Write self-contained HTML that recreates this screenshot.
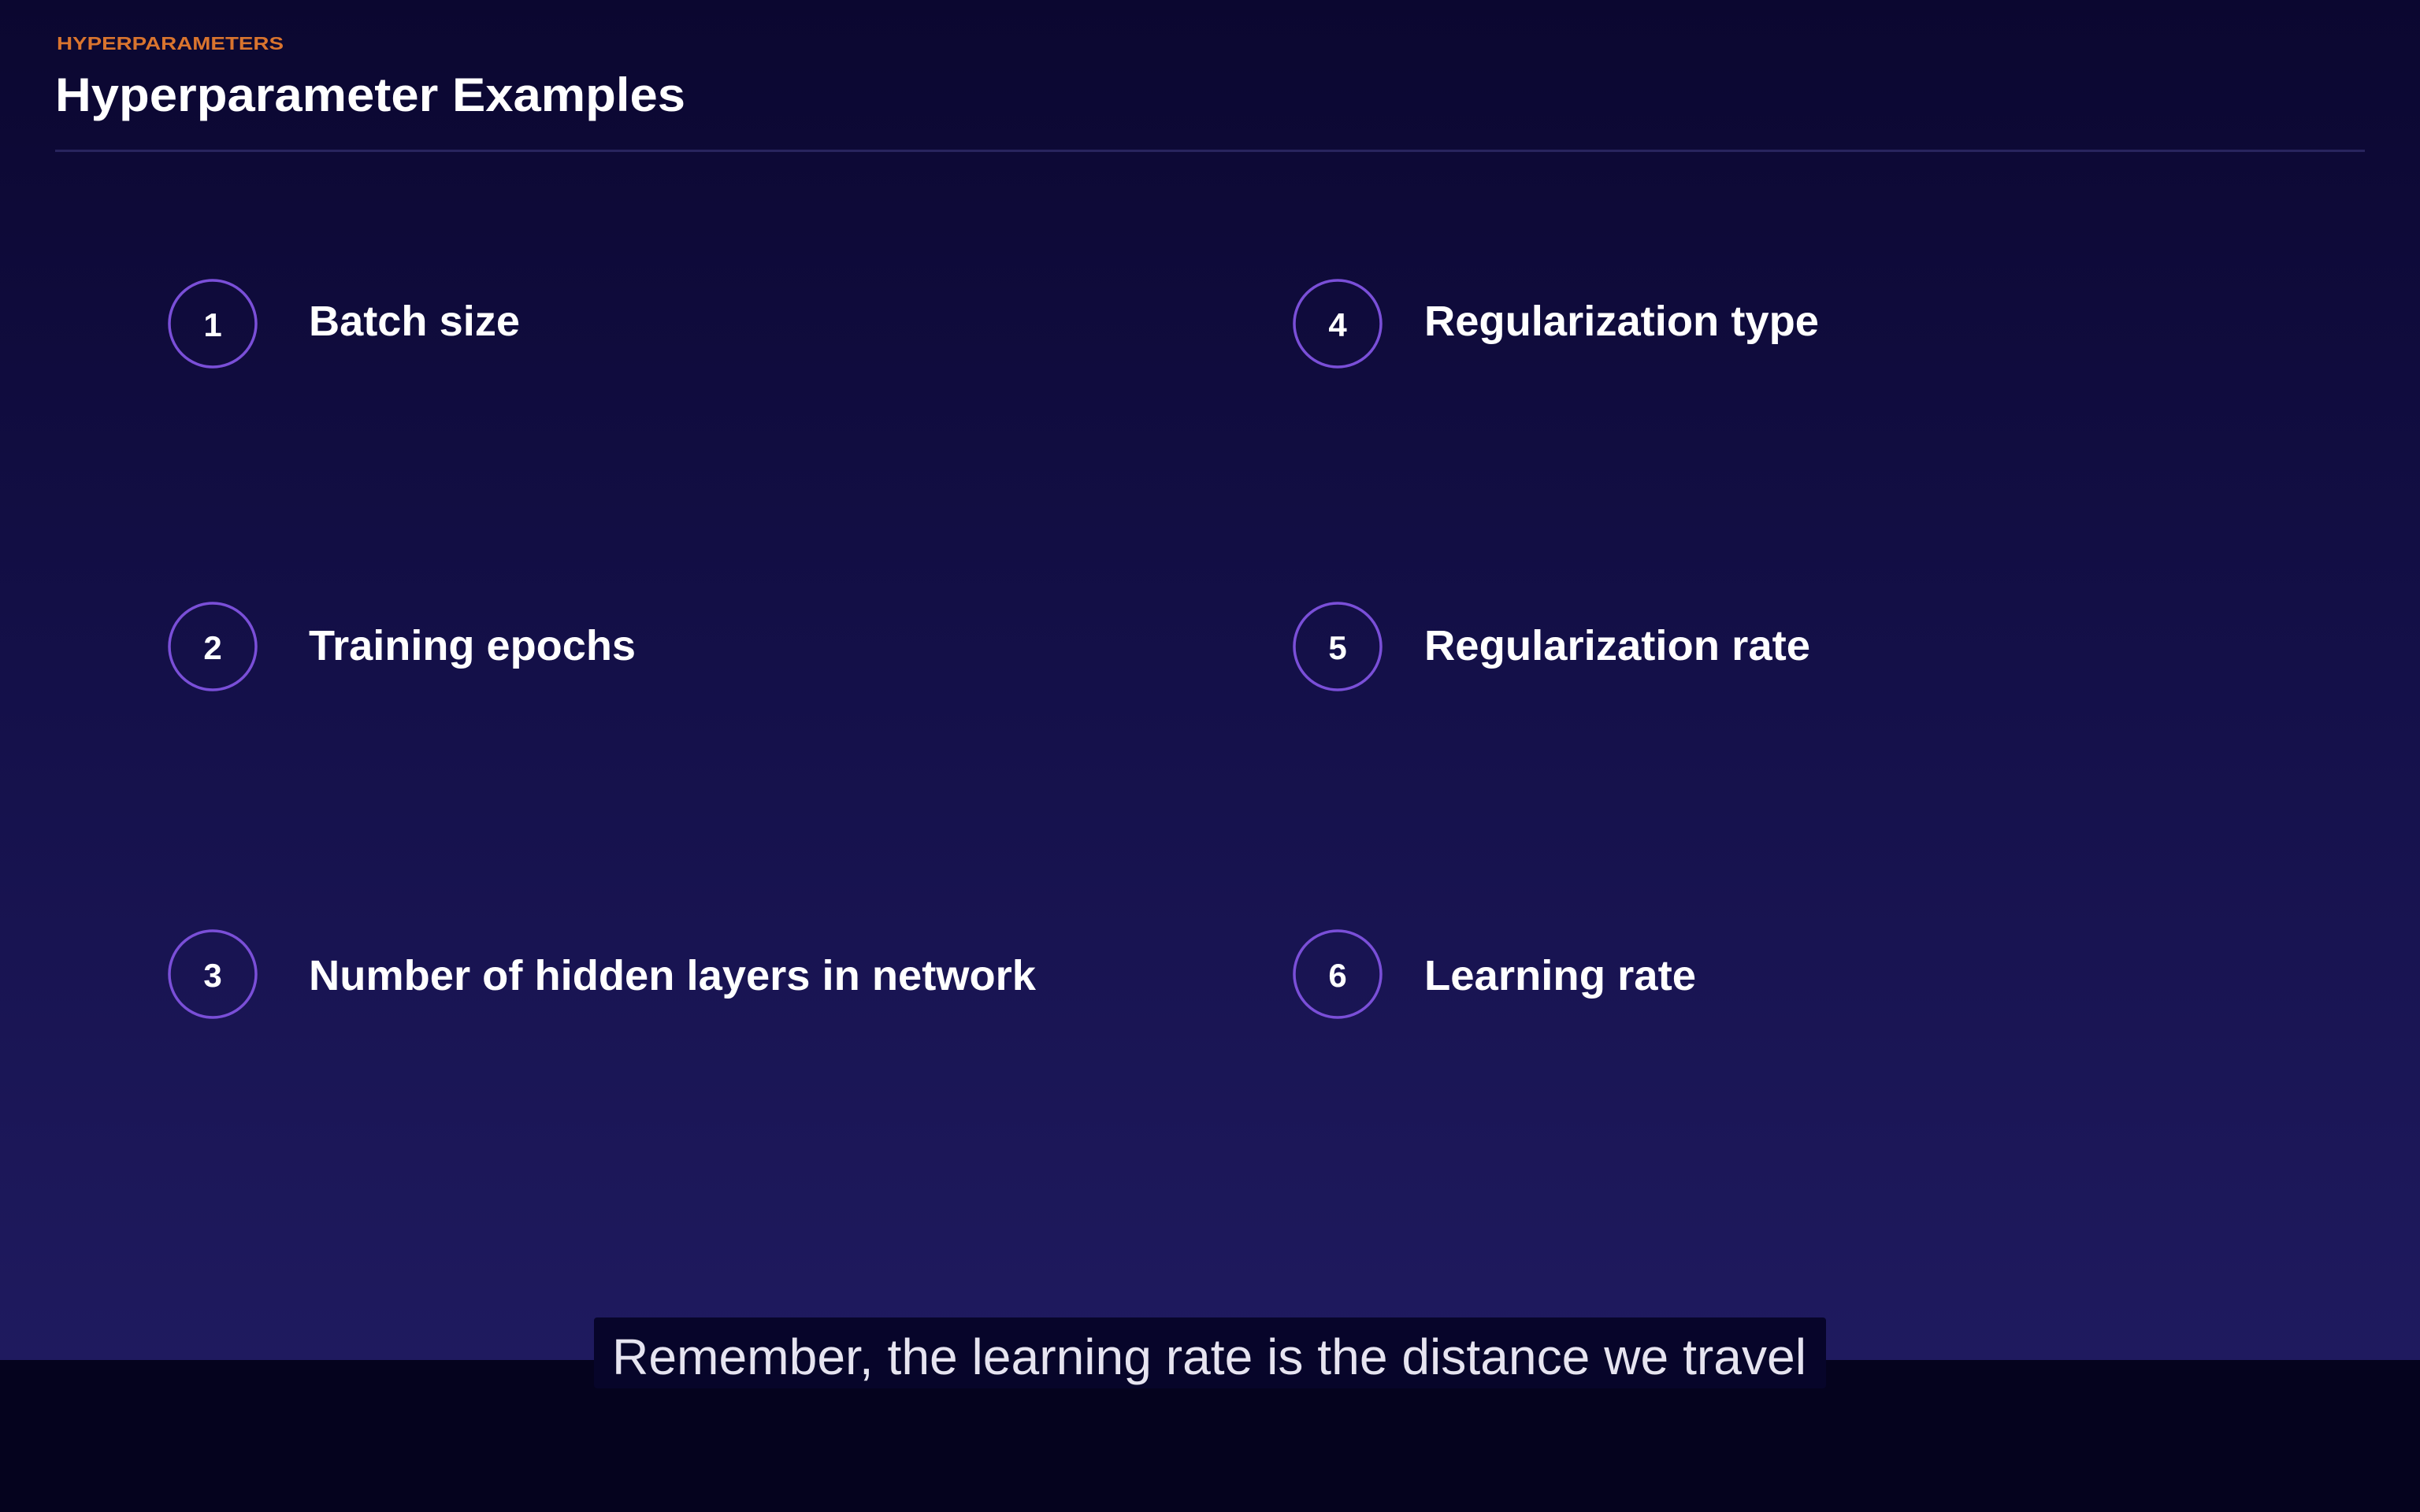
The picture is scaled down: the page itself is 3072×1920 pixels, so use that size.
<!DOCTYPE html>
<html><head><meta charset="utf-8"><style>
html,body{margin:0;padding:0;width:3072px;height:1920px;overflow:hidden;background:#05031e}
svg{display:block}
</style></head><body>
<svg width="3072" height="1920" viewBox="0 0 3072 1920" xmlns="http://www.w3.org/2000/svg" font-family="Liberation Sans, Arial, sans-serif">
<defs>
<linearGradient id="bg" x1="0" y1="0" x2="0" y2="1">
<stop offset="0" stop-color="#0b0730"/>
<stop offset="0.5" stop-color="#141049"/>
<stop offset="1" stop-color="#1f1a5f"/>
</linearGradient>
</defs>
<rect x="0" y="0" width="3072" height="1727" fill="url(#bg)"/>
<rect x="0" y="1727" width="3072" height="193" fill="#05031e"/>
<text x="72" y="63" font-size="23" font-weight="bold" fill="#d9742e" textLength="288" lengthAdjust="spacingAndGlyphs">HYPERPARAMETERS</text>
<text x="70" y="141" font-size="60" font-weight="bold" fill="#ffffff" textLength="800" lengthAdjust="spacingAndGlyphs">Hyperparameter Examples</text>
<rect x="70" y="190" width="2932" height="3" fill="#28245e"/>
<g fill="none" stroke="#7a4fd8" stroke-width="3.5">
<circle cx="270" cy="411" r="55"/><circle cx="270" cy="821" r="55"/><circle cx="270" cy="1237" r="55"/>
<circle cx="1698" cy="411" r="55"/><circle cx="1698" cy="821" r="55"/><circle cx="1698" cy="1237" r="55"/>
</g>
<g font-size="42" font-weight="bold" fill="#ffffff" text-anchor="middle">
<text x="270" y="427">1</text><text x="270" y="837">2</text><text x="270" y="1253">3</text>
<text x="1698" y="427">4</text><text x="1698" y="837">5</text><text x="1698" y="1253">6</text>
</g>
<g font-size="54" font-weight="bold" fill="#ffffff">
<text x="392" y="426" textLength="268" lengthAdjust="spacingAndGlyphs">Batch size</text>
<text x="392" y="838" textLength="415" lengthAdjust="spacingAndGlyphs">Training epochs</text>
<text x="392" y="1257" textLength="923" lengthAdjust="spacingAndGlyphs">Number of hidden layers in network</text>
<text x="1808" y="426" textLength="501" lengthAdjust="spacingAndGlyphs">Regularization type</text>
<text x="1808" y="838" textLength="490" lengthAdjust="spacingAndGlyphs">Regularization rate</text>
<text x="1808" y="1257" textLength="345" lengthAdjust="spacingAndGlyphs">Learning rate</text>
</g>
<rect x="754" y="1673" width="1564" height="90" rx="4" fill="#07052a"/>
<text x="777" y="1745" font-size="64" fill="#e6e4f0" textLength="1516" lengthAdjust="spacingAndGlyphs">Remember, the learning rate is the distance we travel</text>
</svg>
</body></html>
